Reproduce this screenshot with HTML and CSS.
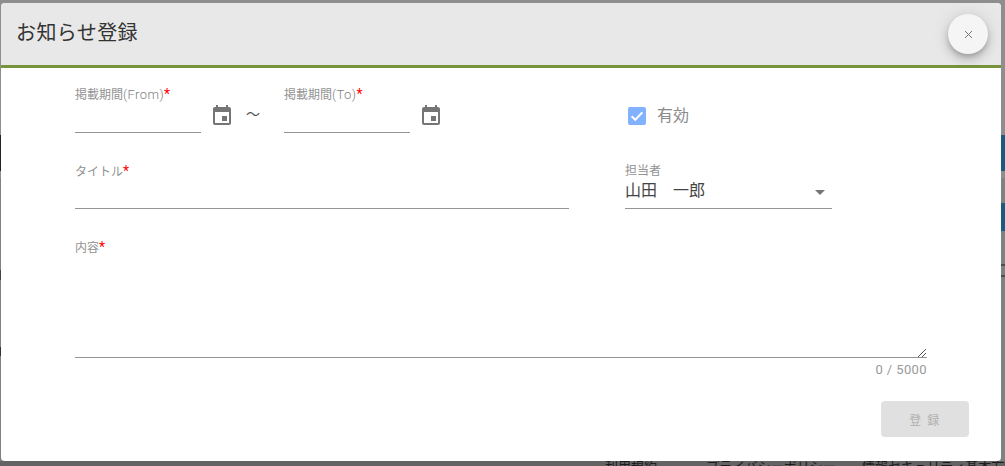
FILE: index.html
```html
<!DOCTYPE html>
<html lang="ja">
<head>
<meta charset="utf-8">
<title>お知らせ登録</title>
<link rel="stylesheet" href="styles.css">
</head>
<body>
<div class="backdrop">
  <div class="edge edge-left-dark"></div>
  <div class="edge edge-left-grey"></div>
  <div class="edge edge-left-mark-a"></div>
  <div class="edge edge-left-mark-b"></div>
  <div class="edge edge-right-grey"></div>
  <div class="edge edge-right-a"></div>
  <div class="edge edge-right-b"></div>
  <div class="edge edge-right-mark-a"></div>
  <div class="edge edge-right-mark-b"></div>
  <div class="footer-links"><span class="link-a">利用規約</span><span class="link-b">プライバシーポリシー</span><span class="link-c">情報セキュリティ基本方針</span></div>
</div>
<main class="dialog">
  <header class="dialog-head">
    <h1 class="dialog-title">お知らせ登録</h1>
    <button class="close" type="button" aria-label="閉じる">
      <svg width="9" height="9" viewBox="0 0 9 9"><path d="M1 1l7 7M8 1l-7 7" stroke="#757575" stroke-width="1" fill="none"/></svg>
    </button>
  </header>
  <form class="dialog-body">
    <div class="row row-dates">
      <div class="field field-date">
        <label class="label">掲載期間<span class="latin">(From)</span><span class="req">*</span></label>
        <div class="line"></div>
      </div>
      <svg class="cal" width="24" height="24" viewBox="0 0 24 24"><path fill="#757575" d="M17 12h-5v5h5v-5zM16 1v2H8V1H6v2H5c-1.11 0-1.99.9-1.99 2L3 19c0 1.1.89 2 2 2h14c1.1 0 2-.9 2-2V5c0-1.1-.9-2-2-2h-1V1h-2zm3 18H5V8h14v11z"/></svg>
      <span class="tilde">～</span>
      <div class="field field-date">
        <label class="label">掲載期間<span class="latin">(To)</span><span class="req">*</span></label>
        <div class="line"></div>
      </div>
      <svg class="cal" width="24" height="24" viewBox="0 0 24 24"><path fill="#757575" d="M17 12h-5v5h5v-5zM16 1v2H8V1H6v2H5c-1.11 0-1.99.9-1.99 2L3 19c0 1.1.89 2 2 2h14c1.1 0 2-.9 2-2V5c0-1.1-.9-2-2-2h-1V1h-2zm3 18H5V8h14v11z"/></svg>
      <div class="check">
        <span class="box"><svg width="18" height="18" viewBox="0 0 18 18"><path d="M3.6 9.2l3.7 3.6 7-7.4" stroke="#fff" stroke-width="2" fill="none"/></svg></span>
        <span class="check-text">有効</span>
      </div>
    </div>
    <div class="row row-title">
      <div class="field field-title">
        <label class="label">タイトル<span class="req">*</span></label>
        <div class="line"></div>
      </div>
      <div class="field field-select">
        <label class="label label-small">担当者</label>
        <div class="select-value"><span>山田　一郎</span><i class="arrow"></i></div>
        <div class="line"></div>
      </div>
    </div>
    <div class="field field-content">
      <label class="label">内容<span class="req">*</span></label>
      <div class="line line-area"></div>
      <svg class="grip" width="10" height="10" viewBox="0 0 10 10"><path d="M1 9l8-8M5 9l4-4" stroke="#555" stroke-width="1" fill="none"/></svg>
      <div class="count">0 / 5000</div>
    </div>
    <div class="actions"><button class="submit" type="button" disabled>登 録</button></div>
  </form>
</main>
</body>
</html>
```
FILE: styles.css
```css
* { box-sizing: border-box; }
html, body { margin: 0; height: 100%; overflow: hidden; }
body {
  background: #8e8e8e;
  font-family: Roboto, "Noto Sans CJK JP", sans-serif;
  padding: 3px 4px 5px 1px;
  height: 466px;
}
.backdrop { position: absolute; inset: 0; overflow: hidden; }
.backdrop::after { content: ""; position: absolute; left: 0; right: 0; bottom: 0; height: 5px; background: #636363; }
.edge { position: absolute; }
.edge-left-dark { left: 0; top: 135px; width: 1px; height: 36px; background: #222; }
.edge-left-grey { left: 0; top: 178px; width: 1px; height: 283px; background: #7c8480; }
.edge-left-mark-a { left: 0; top: 270px; width: 1px; height: 10px; background: #444; }
.edge-left-mark-b { left: 0; top: 347px; width: 1px; height: 9px; background: #333; }
.edge-right-grey { right: 0; top: 178px; width: 4px; height: 283px; background: #7c8480; }
.edge-right-a { right: 0; top: 135px; width: 4px; height: 36px; background: #1c5a80; }
.edge-right-b { right: 0; top: 203px; width: 4px; height: 28px; background: #1c5a80; }
.edge-right-mark-a { right: 0; top: 264px; width: 4px; height: 2px; background: #4c4f4d; }
.edge-right-mark-b { right: 0; top: 275px; width: 4px; height: 2px; background: #4c4f4d; }
.footer-links {
  position: absolute; z-index: 1; left: 0; top: 459px; height: 7px; width: 100%; overflow: hidden;
  font-size: 13px; line-height: 16px; color: #1c1c1c;
}
.footer-links span { position: absolute; top: 0; white-space: nowrap; }
.link-a { left: 605px; }
.link-b { left: 706px; }
.link-c { left: 862px; }
.dialog {
  position: relative; z-index: 2;
  width: 1000px; height: 458px;
  background: #fff;
  border-radius: 4px;
}
.dialog-head {
  height: 65px;
  background: #e8e8e8;
  border-bottom: 3px solid #77933c;
  border-radius: 4px 4px 0 0;
  padding: 18px 15px 0 15px;
  display: flex;
  justify-content: space-between;
  align-items: flex-start;
}
.dialog-title { margin: 0; font-size: 20px; font-weight: 400; line-height: 24px; letter-spacing: .4px; color: #333; }
.close {
  width: 40px; height: 40px; margin: -7px -2px 0 0; padding: 0;
  border: 0; border-radius: 50%;
  background: #f5f5f5;
  box-shadow: 0 3px 5px -1px rgba(0,0,0,.2), 0 6px 10px 0 rgba(0,0,0,.14), 0 1px 18px 0 rgba(0,0,0,.12);
  display: flex; align-items: center; justify-content: center;
}
.dialog-body { padding: 19px 74px 0; display: flex; flex-direction: column; }
.row { display: flex; align-items: flex-start; }
.row-dates { height: 46px; }
.row-title { margin-top: 31px; height: 45px; gap: 56px; }
.field { position: relative; display: flex; flex-direction: column; }
.label { display: block; font-size: 12px; line-height: 16px; color: #929292; height: 16px; margin: -1px 0 1px; white-space: nowrap; }
.latin { font-size: 13px; font-weight: 300; letter-spacing: .4px; color: #808080; }
.req { color: #f00; font-size: 14px; line-height: 16px; }
.line { height: 1px; flex: none; background: #949494; }
.field-date { width: 126px; height: 46px; justify-content: space-between; }
.cal { margin: 17px 0 0 9px; flex: none; }
.tilde { width: 38px; margin: 17px 0 0 12px; font-size: 14px; line-height: 20px; color: #555; flex: none; }
.check { margin: 19px 0 0 185px; display: flex; align-items: center; gap: 11px; flex: none; }
.box { width: 18px; height: 18px; border-radius: 2px; background: #82b1ff; display: block; }
.box svg { display: block; }
.check-text { font-size: 16px; line-height: 20px; color: #8a8a8a; }
.field-title { width: 494px; height: 45px; justify-content: space-between; }
.field-select { width: 207px; height: 45px; }
.label-small { height: 15px; line-height: 15px; margin: 0; }
.select-value { height: 29px; display: flex; justify-content: space-between; font-size: 16px; line-height: 20px; color: #444; padding: 2px 7px 0 0; }
.arrow { width: 0; height: 0; margin-top: 9px; border-left: 5px solid transparent; border-right: 5px solid transparent; border-top: 5px solid #757575; }
.field-content { margin-top: 31px; width: 852px; }
.line-area { margin-top: 101px; }
.grip { position: absolute; right: 0; top: 108px; }
.count { margin-top: 5px; text-align: right; font-size: 13px; line-height: 14px; letter-spacing: .4px; color: #9a9a9a; }
.actions { display: flex; justify-content: flex-end; margin: 24px -42px 0 0; }
.submit {
  width: 88px; height: 36px; border: 0; border-radius: 4px; padding: 0;
  background: #e0e0e0; color: #b0b0b0;
  font-family: inherit; font-size: 12px; letter-spacing: 1.5px;
}
```
